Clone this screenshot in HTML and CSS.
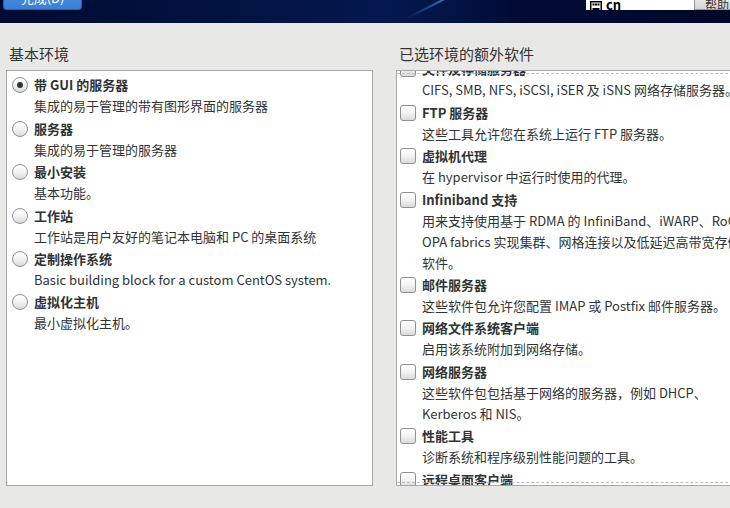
FILE: index.html
```html
<!DOCTYPE html>
<html lang="zh-CN">
<head>
<meta charset="utf-8">
<title>软件选择</title>
<link rel="stylesheet" href="styles.css">
</head>
<body>
<header class="topbar">
  <div class="streak"></div>
  <div class="topbar-inner">
    <button class="done-btn">完成(D)</button>
    <div class="kbd-field">
      <svg class="kbd-icon" width="12" height="12" viewBox="0 0 12 12"><rect x="0.75" y="0.75" width="10.5" height="10.5" fill="none" stroke="#000" stroke-width="1.5"/><rect x="2.5" y="2.5" width="2" height="2"/><rect x="5" y="2.5" width="2" height="2"/><rect x="7.5" y="2.5" width="2" height="2"/><rect x="2.5" y="7" width="7" height="2"/></svg>
      <span class="kbd-text">cn</span>
    </div>
    <button class="help-btn">帮助！</button>
  </div>
</header>

<main class="content">
  <section class="column">
    <h2 class="col-title">基本环境</h2>
    <div class="panel">
      <ul class="env-list">
        <li class="item">
          <span class="radio checked"></span>
          <div class="item-text">
            <div class="item-title">带 GUI 的服务器</div>
            <div class="item-desc">集成的易于管理的带有图形界面的服务器</div>
          </div>
        </li>
        <li class="item">
          <span class="radio"></span>
          <div class="item-text">
            <div class="item-title">服务器</div>
            <div class="item-desc">集成的易于管理的服务器</div>
          </div>
        </li>
        <li class="item">
          <span class="radio"></span>
          <div class="item-text">
            <div class="item-title">最小安装</div>
            <div class="item-desc">基本功能。</div>
          </div>
        </li>
        <li class="item">
          <span class="radio"></span>
          <div class="item-text">
            <div class="item-title">工作站</div>
            <div class="item-desc">工作站是用户友好的笔记本电脑和 PC 的桌面系统</div>
          </div>
        </li>
        <li class="item">
          <span class="radio"></span>
          <div class="item-text">
            <div class="item-title">定制操作系统</div>
            <div class="item-desc">Basic building block for a custom CentOS system.</div>
          </div>
        </li>
        <li class="item">
          <span class="radio"></span>
          <div class="item-text">
            <div class="item-title">虚拟化主机</div>
            <div class="item-desc">最小虚拟化主机。</div>
          </div>
        </li>
      </ul>
    </div>
  </section>

  <section class="column">
    <h2 class="col-title">已选环境的额外软件</h2>
    <div class="panel panel-scroll">
      <ul class="addon-list">
        <li class="item">
          <span class="check"></span>
          <div class="item-text">
            <div class="item-title">文件及存储服务器</div>
            <div class="item-desc">CIFS, SMB, NFS, iSCSI, iSER 及 iSNS 网络存储服务器。</div>
          </div>
        </li>
        <li class="item">
          <span class="check"></span>
          <div class="item-text">
            <div class="item-title">FTP 服务器</div>
            <div class="item-desc">这些工具允许您在系统上运行 FTP 服务器。</div>
          </div>
        </li>
        <li class="item">
          <span class="check"></span>
          <div class="item-text">
            <div class="item-title">虚拟机代理</div>
            <div class="item-desc">在 hypervisor 中运行时使用的代理。</div>
          </div>
        </li>
        <li class="item">
          <span class="check"></span>
          <div class="item-text">
            <div class="item-title">Infiniband 支持</div>
            <div class="item-desc">用来支持使用基于 RDMA 的 InfiniBand、iWARP、RoCE 和<br>OPA fabrics 实现集群、网格连接以及低延迟高带宽存储的<br>软件。</div>
          </div>
        </li>
        <li class="item">
          <span class="check"></span>
          <div class="item-text">
            <div class="item-title">邮件服务器</div>
            <div class="item-desc">这些软件包允许您配置 IMAP 或 Postfix 邮件服务器。</div>
          </div>
        </li>
        <li class="item">
          <span class="check"></span>
          <div class="item-text">
            <div class="item-title">网络文件系统客户端</div>
            <div class="item-desc">启用该系统附加到网络存储。</div>
          </div>
        </li>
        <li class="item">
          <span class="check"></span>
          <div class="item-text">
            <div class="item-title">网络服务器</div>
            <div class="item-desc">这些软件包包括基于网络的服务器，例如 DHCP、<br>Kerberos 和 NIS。</div>
          </div>
        </li>
        <li class="item">
          <span class="check"></span>
          <div class="item-text">
            <div class="item-title">性能工具</div>
            <div class="item-desc">诊断系统和程序级别性能问题的工具。</div>
          </div>
        </li>
        <li class="item">
          <span class="check"></span>
          <div class="item-text">
            <div class="item-title">远程桌面客户端</div>
            <div class="item-desc">远程桌面客户端。</div>
          </div>
        </li>
      </ul>
    </div>
  </section>
</main>
</body>
</html>
```

FILE: styles.css
```css
* { box-sizing: border-box; }

html, body {
  margin: 0;
  padding: 0;
  width: 730px;
  height: 508px;
  overflow: hidden;
  background: #e8e8e7;
  font-family: "Noto Sans CJK SC", "Noto Sans", sans-serif;
  color: #2e3436;
}

.topbar {
  height: 23px;
  overflow: hidden;
  position: relative;
  background: linear-gradient(90deg, #010b33 0%, #02123f 30%, #03184f 52%, #021546 60%, #010a33 72%, #00072a 100%);
}

.streak {
  position: absolute;
  left: 420px;
  top: -29px;
  width: 2px;
  height: 80px;
  background: linear-gradient(180deg, rgba(70,120,210,0.85) 20%, rgba(50,90,180,0) 70%);
  transform: rotate(63deg);
}

.topbar-inner {
  position: relative;
  display: flex;
  align-items: flex-start;
  height: 23px;
  padding-left: 3px;
}

.done-btn {
  width: 79px;
  height: 26px;
  margin-top: -16px;
  border: 1px solid #1f5fb0;
  border-radius: 3px;
  background: linear-gradient(180deg, #4a90e0, #3b80d5);
  color: #fff;
  font-family: inherit;
  font-size: 13px;
  padding: 0;
}

.kbd-field {
  margin-left: auto;
  width: 108px;
  height: 10px;
  background: #fff;
  display: flex;
  align-items: flex-end;
  padding-left: 4px;
  overflow: hidden;
  gap: 4px;
}

.kbd-icon { display: block; margin-bottom: -3px; }

.kbd-text {
  font-size: 13px;
  font-weight: bold;
  line-height: 10px;
  height: 10px;
  color: #000;
}

.help-btn {
  width: 60px;
  height: 10px;
  margin-right: -24px;
  border: 1px solid #9a9a9a;
  border-top: none;
  background: linear-gradient(180deg, #e6e6e6, #d4d4d4);
  padding: 0 0 0 10px;
  text-align: left;
  font-family: inherit;
  font-size: 12px;
  line-height: 4px;
  overflow: hidden;
  color: #333;
}

.content {
  display: grid;
  grid-template-columns: 367px 367px;
  column-gap: 23px;
  padding-left: 6px;
}

.col-title {
  margin: 0;
  padding: 20px 0 0 3px;
  height: 47px;
  font-size: 15px;
  font-weight: normal;
  line-height: 22px;
  color: #333;
}

.panel {
  height: 416px;
  background: #fff;
  border: 1px solid #a8a8a8;
  overflow: hidden;
  position: relative;
}

.panel-scroll {
  border-right: none;
}

.panel-scroll::before,
.panel-scroll::after {
  content: "";
  position: absolute;
  left: 0;
  right: 0;
  height: 0;
  border-top: 1px dashed #bcbcbc;
  z-index: 1;
}
.panel-scroll::before { top: 2px; }
.panel-scroll::after { bottom: 2px; }

.env-list,
.addon-list {
  list-style: none;
  margin: 0;
  padding: 2px 0 0 5px;
}

/* content scrolled down a little inside the add-on list */
.addon-list {
  margin-top: -16px;
  padding-left: 3px;
}

.item {
  display: flex;
  gap: 6px;
  padding-top: 2.4px;
}

.item-title {
  font-size: 13px;
  font-weight: bold;
  line-height: 20px;
  color: #2e3436;
}

.item-desc {
  font-size: 13px;
  line-height: 21px;
  color: #2e3436;
  white-space: nowrap;
}

.radio,
.check {
  flex: none;
  width: 16px;
  height: 16px;
  margin-top: 2px;
  border: 1px solid #8f9294;
  background: linear-gradient(180deg, #ffffff 0%, #f3f3f3 50%, #dadada 100%);
}

.radio {
  border-radius: 50%;
  display: flex;
  align-items: center;
  justify-content: center;
}

.radio.checked::after {
  content: "";
  width: 6px;
  height: 6px;
  border-radius: 50%;
  background: #2e3436;
}

.check {
  border-radius: 3px;
}
```
